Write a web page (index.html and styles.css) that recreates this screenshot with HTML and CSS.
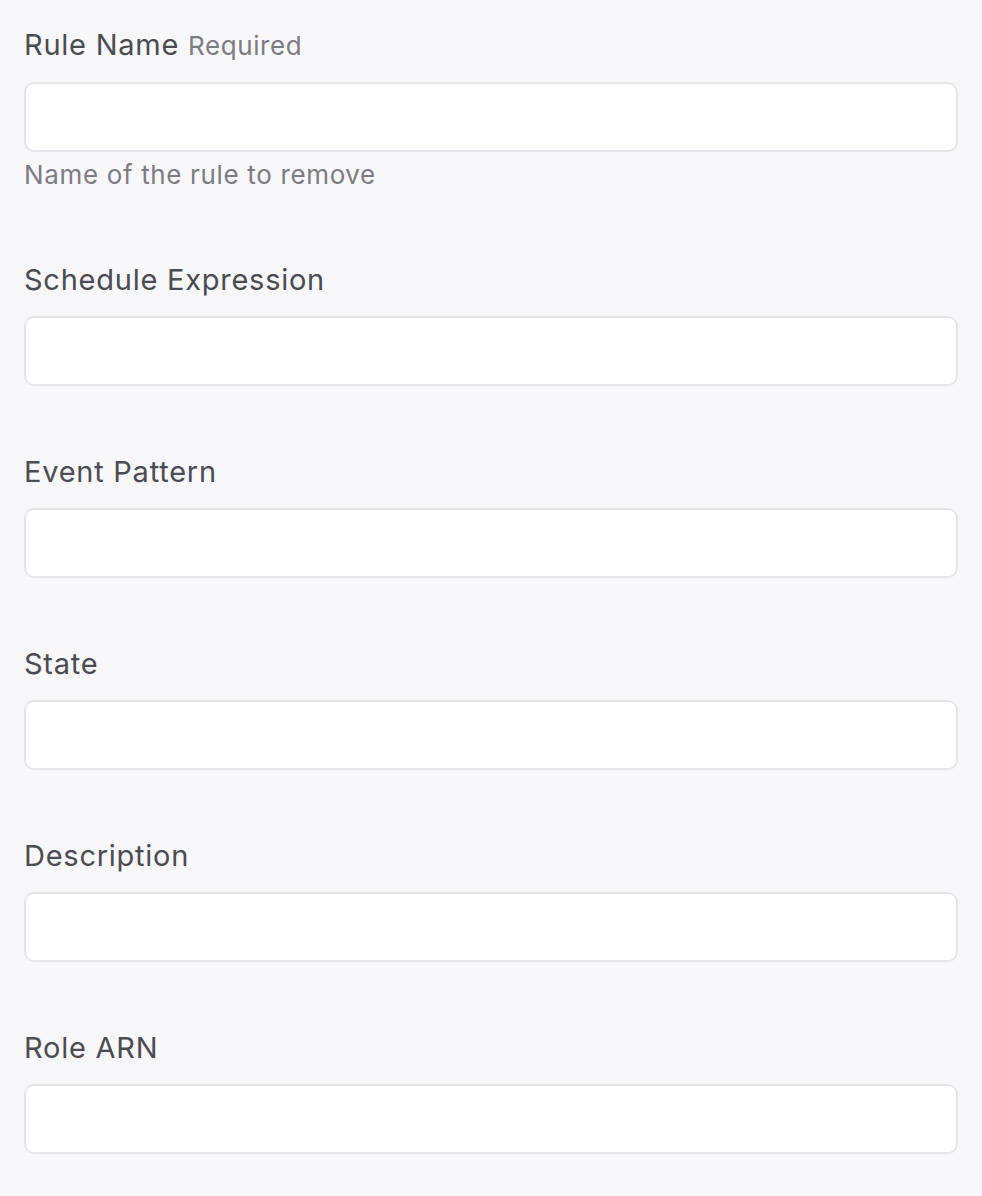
FILE: index.html
```html
<!DOCTYPE html>
<html lang="en">
<head>
<meta charset="utf-8">
<title>Rule form</title>
<link rel="stylesheet" href="styles.css">
</head>
<body>
<form class="form">
  <div class="field">
    <label class="label">Rule Name <span class="req">Required</span></label>
    <input class="input" type="text">
    <div class="help">Name of the rule to remove</div>
  </div>
  <div class="field">
    <label class="label">Schedule Expression</label>
    <input class="input" type="text">
  </div>
  <div class="field">
    <label class="label">Event Pattern</label>
    <input class="input" type="text">
  </div>
  <div class="field">
    <label class="label">State</label>
    <input class="input" type="text">
  </div>
  <div class="field">
    <label class="label">Description</label>
    <input class="input" type="text">
  </div>
  <div class="field">
    <label class="label">Role ARN</label>
    <input class="input" type="text">
  </div>
</form>
</body>
</html>
```
FILE: styles.css
```css
html, body {
  margin: 0;
  padding: 0;
  background: #f8f8fa;
}
body {
  font-family: Inter, "Noto Sans", "Liberation Sans", sans-serif;
}
.form {
  display: flex;
  flex-direction: column;
  padding: 24px 24px 0 24px;
}
.field {
  display: flex;
  flex-direction: column;
  margin-bottom: 65px;
}
.label {
  font-size: 29px;
  letter-spacing: 0.75px;
  line-height: 42px;
  color: #4b4b53;
  margin-bottom: 15px;
}
.req {
  font-size: 26px;
  letter-spacing: 0.6px;
  color: #7c7c84;
}
.input {
  box-sizing: border-box;
  height: 70px;
  width: 100%;
  margin: 0;
  background: #ffffff;
  border: 2px solid #e6e6ea;
  border-radius: 10px;
  outline: none;
  font-family: inherit;
  font-size: 26px;
}
.help {
  margin-top: 3px;
  font-size: 26px;
  letter-spacing: 0.65px;
  line-height: 39px;
  color: #7c7c84;
}
```
